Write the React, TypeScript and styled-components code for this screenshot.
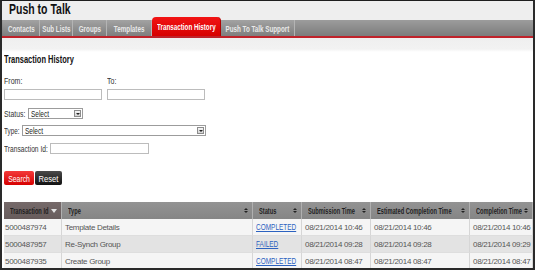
import React from 'react';
import styled, { createGlobalStyle } from 'styled-components';

const GlobalStyle = createGlobalStyle`
  html, body {
    margin: 0;
    padding: 0;
    background: #ffffff;
  }
  * {
    box-sizing: border-box;
  }
`;

const Frame = styled.div`
  width: 535px;
  height: 270px;
  overflow: hidden;
  border-top: 1px solid #1e1e1e;
  border-left: 2px solid #2a2a2a;
  border-right: 2px solid #2a2a2a;
  border-bottom: 2px solid #2a2a2a;
  background: #ffffff;
  font-family: "Liberation Sans", Arial, sans-serif;
  display: flex;
  flex-direction: column;
`;

// the original UI uses a narrow face; squeeze the text sideways
const Squeeze = styled.span<{ $k: number; $origin?: string }>`
  display: inline-block;
  white-space: nowrap;
  transform: scaleX(${(p) => p.$k});
  transform-origin: ${(p) => p.$origin || 'left center'};
`;

const Header = styled.div`
  height: 20px;
  background: #eeeeee;
  padding-left: 7px;
  display: flex;
  align-items: center;
`;

const Title = styled.h1`
  margin: 0;
  font-size: 15px;
  line-height: 16px;
  font-weight: bold;
  color: #111;
`;

const TabBar = styled.div`
  height: 21px;
  display: flex;
  align-items: flex-end;
  background: linear-gradient(#eeeeee 0 3px, #9c9c9c 3px, #8a8a8a 12px, #7c7c7c 19px);
  border-bottom: 2px solid #c0222a;
  padding-left: 1px;
`;

const Tab = styled.div<{ $active?: boolean; $w: number }>`
  width: ${(p) => p.$w}px;
  height: ${(p) => (p.$active ? '19px' : '16px')};
  display: flex;
  align-items: center;
  justify-content: center;
  font-size: 9.5px;
  font-weight: bold;
  color: ${(p) => (p.$active ? '#ffffff' : '#e9e9e9')};
  background: ${(p) =>
    p.$active ? 'linear-gradient(#f21414, #d60000)' : 'linear-gradient(#a2a2a2, #7e7e7e)'};
  border-right: 1px solid ${(p) => (p.$active ? '#b00000' : '#b4b4b4')};
  border-radius: ${(p) => (p.$active ? '4px 4px 0 0' : '0')};
`;

const Body = styled.div`
  flex: 1;
  background: linear-gradient(#efefef 0, #f2f2f2 11px, #ffffff 14px);
  padding: 15px 0 0 2px;
  display: flex;
  flex-direction: column;
`;

const SectionTitle = styled.h2`
  margin: 0;
  font-size: 11px;
  line-height: 12px;
  font-weight: bold;
  color: #111;
`;

const Label = styled.div<{ $w?: number }>`
  width: ${(p) => (p.$w ? `${p.$w}px` : 'auto')};
  flex-shrink: 0;
  font-size: 9px;
  line-height: 10px;
  color: #333;
`;

const DateRow = styled.div`
  display: flex;
  gap: 5px;
  margin-top: 11px;
`;

const DateField = styled.div`
  display: flex;
  flex-direction: column;
  gap: 3px;
`;

const TextInput = styled.div<{ $w: number }>`
  width: ${(p) => p.$w}px;
  height: 11px;
  border: 1px solid #bcbcbc;
  background: #fff;
`;

const InlineField = styled.div<{ $top: number }>`
  display: flex;
  align-items: center;
  margin-top: ${(p) => p.$top}px;
`;

const Select = styled.div<{ $w: number }>`
  width: ${(p) => p.$w}px;
  height: 11px;
  border: 1px solid #9c9c9c;
  background: #fff;
  display: flex;
  align-items: center;
  justify-content: space-between;
  padding: 0 1px 0 2px;
  font-size: 9px;
  color: #222;
`;

const Arrow = styled.span`
  width: 7px;
  height: 7px;
  border: 1px solid #8c8c8c;
  background: linear-gradient(#f6f6f6, #d2d2d2);
  display: flex;
  align-items: center;
  justify-content: center;
  &::after {
    content: '';
    border-left: 2px solid transparent;
    border-right: 2px solid transparent;
    border-top: 2px solid #222;
  }
`;

const Buttons = styled.div`
  display: flex;
  gap: 1px;
  margin-top: 17px;
`;

const Button = styled.div<{ $variant: 'red' | 'dark'; $w: number }>`
  width: ${(p) => p.$w}px;
  height: 14px;
  display: flex;
  align-items: center;
  justify-content: center;
  font-size: 9.5px;
  color: #fff;
  border-radius: 2px;
  background: ${(p) =>
    p.$variant === 'red' ? 'linear-gradient(#f33a3a, #d60000)' : 'linear-gradient(#4a4a4a, #111111)'};
`;

const Table = styled.div`
  margin-top: 17px;
  display: grid;
  grid-template-columns: 58px 191px 49px 69px 99px 1fr;
  font-size: 8px;
  color: #555;
`;

const Th = styled.div<{ $sorted?: boolean }>`
  height: 17px;
  display: flex;
  align-items: center;
  padding: 0 4px 0 6px;
  font-size: 9px;
  font-weight: bold;
  color: #1e1e1e;
  background: ${(p) =>
    p.$sorted ? 'linear-gradient(#766a6a, #675c5c)' : 'linear-gradient(#939393, #858585)'};
  border-right: 1px solid #b0b0b0;
  overflow: hidden;
`;

const HeadText = styled.div`
  flex: 1;
  min-width: 0;
`;

const SortIcon = styled.span`
  display: flex;
  flex-direction: column;
  gap: 1px;
  flex-shrink: 0;
  &::before,
  &::after {
    content: '';
    border-left: 2px solid transparent;
    border-right: 2px solid transparent;
  }
  &::before {
    border-bottom: 2px solid #222;
  }
  &::after {
    border-top: 2px solid #222;
  }
`;

const DownIcon = styled.span`
  flex-shrink: 0;
  border-left: 3px solid transparent;
  border-right: 3px solid transparent;
  border-top: 4px solid #e4e4e4;
`;

const Td = styled.div<{ $alt: boolean; $first?: boolean }>`
  height: 17px;
  display: flex;
  align-items: center;
  padding-left: ${(p) => (p.$first ? '1px' : '3px')};
  background: ${(p) => (p.$alt ? '#e3e3e3' : '#f5f5f5')};
  border-right: 1px solid #d6d6d6;
  border-bottom: 1px solid #dedede;
  white-space: nowrap;
  overflow: hidden;
  letter-spacing: -0.3px;
`;

const StatusLink = styled.a`
  display: inline-block;
  white-space: nowrap;
  font-size: 8.5px;
  color: #2c62c0;
  text-decoration: underline;
  letter-spacing: 0;
  transform: scaleX(0.76);
  transform-origin: left center;
`;

const columns = [
  'Transaction Id',
  'Type',
  'Status',
  'Submission Time',
  'Estimated Completion Time',
  'Completion Time',
];

const rows = [
  ['5000487974', 'Template Details', 'COMPLETED', '08/21/2014 10:46', '08/21/2014 10:46', '08/21/2014 10:46'],
  ['5000487957', 'Re-Synch Group', 'FAILED', '08/21/2014 09:28', '08/21/2014 09:28', '08/21/2014 09:29'],
  ['5000487935', 'Create Group', 'COMPLETED', '08/21/2014 08:47', '08/21/2014 08:47', '08/21/2014 08:47'],
];

const tabs: [string, number][] = [
  ['Contacts', 37],
  ['Sub Lists', 33],
  ['Groups', 34],
  ['Templates', 45],
  ['Transaction History', 69],
  ['Push To Talk Support', 74],
];

export default function App() {
  return (
    <>
      <GlobalStyle />
      <Frame>
        <Header>
          <Title>
            <Squeeze $k={0.7}>Push to Talk</Squeeze>
          </Title>
        </Header>
        <TabBar>
          {tabs.map(([t, w]) => (
            <Tab key={t} $w={w} $active={t === 'Transaction History'}>
              <Squeeze $k={0.66} $origin="center">
                {t}
              </Squeeze>
            </Tab>
          ))}
        </TabBar>
        <Body>
          <SectionTitle>
            <Squeeze $k={0.68}>Transaction History</Squeeze>
          </SectionTitle>
          <DateRow>
            <DateField>
              <Label>
                <Squeeze $k={0.78}>From:</Squeeze>
              </Label>
              <TextInput $w={98} />
            </DateField>
            <DateField>
              <Label>
                <Squeeze $k={0.78}>To:</Squeeze>
              </Label>
              <TextInput $w={98} />
            </DateField>
          </DateRow>
          <InlineField $top={8}>
            <Label $w={24}>
              <Squeeze $k={0.76}>Status:</Squeeze>
            </Label>
            <Select $w={55}>
              <Squeeze $k={0.72}>Select</Squeeze>
              <Arrow />
            </Select>
          </InlineField>
          <InlineField $top={6}>
            <Label $w={18}>
              <Squeeze $k={0.7}>Type:</Squeeze>
            </Label>
            <Select $w={184}>
              <Squeeze $k={0.72}>Select</Squeeze>
              <Arrow />
            </Select>
          </InlineField>
          <InlineField $top={7}>
            <Label $w={46}>
              <Squeeze $k={0.74}>Transaction Id:</Squeeze>
            </Label>
            <TextInput $w={99} />
          </InlineField>
          <Buttons>
            <Button $variant="red" $w={30}>
              <Squeeze $k={0.72} $origin="center">
                Search
              </Squeeze>
            </Button>
            <Button $variant="dark" $w={27}>
              <Squeeze $k={0.8} $origin="center">
                Reset
              </Squeeze>
            </Button>
          </Buttons>
          <Table>
            {columns.map((c, i) => (
              <Th key={c} $sorted={i === 0}>
                <HeadText>
                  <Squeeze $k={0.63}>{c}</Squeeze>
                </HeadText>
                {i === 0 ? <DownIcon /> : <SortIcon />}
              </Th>
            ))}
            {rows.map((r, ri) =>
              r.map((cell, ci) => (
                <Td key={`${ri}-${ci}`} $alt={ri % 2 === 1} $first={ci === 0}>
                  {ci === 2 ? <StatusLink href="#">{cell}</StatusLink> : cell}
                </Td>
              ))
            )}
          </Table>
        </Body>
      </Frame>
    </>
  );
}
